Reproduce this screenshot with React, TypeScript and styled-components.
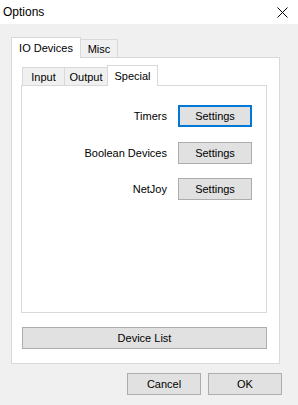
import { Fragment } from "react"
import styled, { createGlobalStyle } from "styled-components"

const Global = createGlobalStyle`
  html, body {
    margin: 0;
    padding: 0;
    background: #f0f0f0;
  }
  * {
    box-sizing: border-box;
  }
`

const Window = styled.div`
  width: 298px;
  height: 405px;
  display: flex;
  flex-direction: column;
  background: #f0f0f0;
  font-family: "Liberation Sans", Arial, sans-serif;
  font-size: 11px;
  color: #000;
  overflow: hidden;
`

const TitleBar = styled.div`
  height: 24px;
  background: #fff;
  display: flex;
  align-items: center;
  justify-content: space-between;
  padding: 0 10px 0 3px;
`

const Title = styled.span`
  font-size: 12px;
  line-height: 24px;
`

const Body = styled.div`
  flex: 1;
  display: flex;
  flex-direction: column;
  padding: 13px 16px 0 11px;
`

const TabStrip = styled.div<{ $inset?: number }>`
  display: flex;
  align-items: flex-end;
  padding-left: ${p => p.$inset ?? 0}px;
  position: relative;
  z-index: 1;
`

const Tab = styled.div<{ $active?: boolean; $w: number }>`
  width: ${p => p.$w}px;
  height: ${p => (p.$active ? 21 : 18)}px;
  margin-bottom: ${p => (p.$active ? -1 : 0)}px;
  background: ${p => (p.$active ? "#fff" : "#f0f0f0")};
  border: 1px solid #d9d9d9;
  border-bottom: none;
  display: flex;
  align-items: center;
  justify-content: center;
  padding-top: ${p => (p.$active ? 0 : 1)}px;
  white-space: nowrap;
  & + & {
    margin-left: -1px;
  }
`

const TabPanel = styled.div`
  background: #fff;
  border: 1px solid #d9d9d9;
  display: flex;
  flex-direction: column;
`

const OuterPanel = styled(TabPanel)`
  width: 269px;
  height: 307px;
  padding: 7px 12px 14px 9px;
`

const InnerPanel = styled(TabPanel)`
  flex: 1;
  padding: 19px 14px 0 0;
  align-items: flex-end;
`

const SettingsGrid = styled.div`
  display: grid;
  grid-template-columns: auto 74px;
  column-gap: 11px;
  row-gap: 14.5px;
  align-items: center;
`

const Label = styled.span`
  justify-self: end;
`

const Button = styled.button<{ $focused?: boolean; $w?: string }>`
  width: ${p => p.$w ?? "74px"};
  height: 22px;
  margin: 0;
  padding: 0;
  background: #e1e1e1;
  border: ${p => (p.$focused ? "2px solid #0078d7" : "1px solid #adadad")};
  font-family: "Liberation Sans", Arial, sans-serif;
  font-size: 11px;
  color: #000;
`

const WideButton = styled(Button)`
  margin-top: 14px;
  margin-left: 1px;
`

const Footer = styled.div`
  display: flex;
  justify-content: flex-end;
  gap: 7px;
  margin-top: 9px;
`

const CloseIcon = () => (
  <svg width="11" height="11" viewBox="0 0 11 11">
    <path d="M0.5 0.5 L10.5 10.5 M10.5 0.5 L0.5 10.5" stroke="#000" strokeWidth="1" />
  </svg>
)

const rows = ["Timers", "Boolean Devices", "NetJoy"]

export default function App() {
  return (
    <Window>
      <Global />
      <TitleBar>
        <Title>Options</Title>
        <CloseIcon />
      </TitleBar>
      <Body>
        <TabStrip>
          <Tab $active $w={70}>IO Devices</Tab>
          <Tab $w={38}>Misc</Tab>
        </TabStrip>
        <OuterPanel>
          <TabStrip $inset={1}>
            <Tab $w={43}>Input</Tab>
            <Tab $w={44}>Output</Tab>
            <Tab $active $w={51}>Special</Tab>
          </TabStrip>
          <InnerPanel>
            <SettingsGrid>
              {rows.map((r, i) => (
                <Fragment key={r}>
                  <Label>{r}</Label>
                  <Button $focused={i === 0}>Settings</Button>
                </Fragment>
              ))}
            </SettingsGrid>
          </InnerPanel>
          <WideButton $w="245px">Device List</WideButton>
        </OuterPanel>
        <Footer>
          <Button>Cancel</Button>
          <Button>OK</Button>
        </Footer>
      </Body>
    </Window>
  )
}
